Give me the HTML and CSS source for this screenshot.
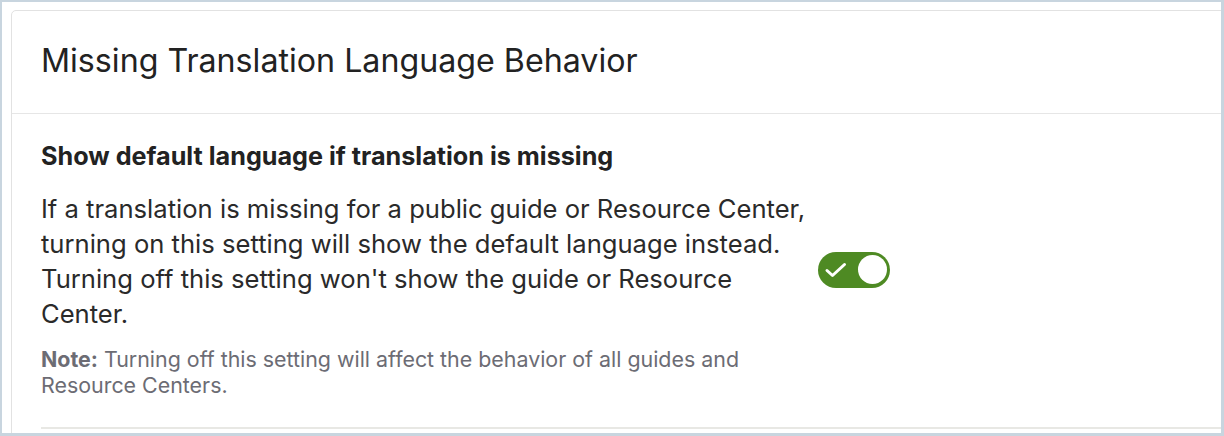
FILE: index.html
```html
<!DOCTYPE html>
<html>
<head>
<meta charset="utf-8">
<link rel="stylesheet" href="styles.css">
</head>
<body>
<div class="page">
  <div class="card">
    <div class="card-header">
      <h1 class="card-title">Missing Translation Language Behavior</h1>
    </div>
    <div class="setting-row">
      <div class="setting-text">
        <h2 class="setting-title">Show default language if translation is missing</h2>
        <p class="setting-desc">If a translation is missing for a public guide or Resource Center, turning on this setting will show the default language instead. Turning off this setting won't show the guide or Resource Center.</p>
        <p class="setting-note"><strong>Note:</strong> Turning off this setting will affect the behavior of all guides and Resource Centers.</p>
      </div>
      <div class="toggle" role="switch" aria-checked="true">
        <svg class="toggle-check" width="23" height="16" viewBox="0 0 23 16"><path d="M3 8.5 L8.5 13.5 L20.5 2.5" fill="none" stroke="#fff" stroke-width="3" stroke-linecap="round" stroke-linejoin="round"/></svg>
        <span class="toggle-knob"></span>
      </div>
    </div>
  </div>
</div>
</body>
</html>
```

FILE: styles.css
```css
* { box-sizing: border-box; }
html, body { margin: 0; height: 100%; }
body {
  background: #c8d5df;
  font-family: Inter, "Noto Sans", sans-serif;
  padding: 2px 3px 3px 2px;
  overflow: hidden;
}
.page {
  background: #fff;
  height: 100%;
  overflow: hidden;
  padding: 8px 0 0 9px;
}
.card {
  width: calc(100% + 40px);
  height: 600px;
  border: 1px solid #e2e2e2;
  border-radius: 5px;
}
.card-header {
  height: 103px;
  border-bottom: 1px solid #e6e6e6;
  display: flex;
  align-items: center;
  padding: 0 29px 2px;
}
.card-title {
  margin: 0;
  font-size: 32.2px;
  line-height: 40px;
  font-weight: 400;
  color: #222;
}
.setting-row {
  margin-left: 29px;
  display: flex;
  align-items: center;
  padding: 27px 0 29px;
  border-bottom: 2px solid #e8e8e4;
  width: 1200px;
}
.setting-text {
  width: 777px;
}
.setting-title {
  margin: 0 0 20px;
  font-size: 25.2px;
  font-weight: 700;
  color: #222;
  line-height: 30px;
}
.setting-desc {
  margin: 0;
  font-size: 25.6px;
  line-height: 35px;
  color: #2a2a2a;
}
.setting-note {
  margin: 15px 0 0;
  font-size: 21.4px;
  line-height: 26px;
  color: #6c6c74;
}
.setting-note strong { font-weight: 700; }
.toggle {
  width: 72px;
  height: 36px;
  border-radius: 18px;
  background: #4e8a23;
  display: flex;
  align-items: center;
  justify-content: space-between;
  padding: 0 3px 0 6px;
}
.toggle-knob {
  width: 29px;
  height: 29px;
  border-radius: 50%;
  background: #fff;
}
```
